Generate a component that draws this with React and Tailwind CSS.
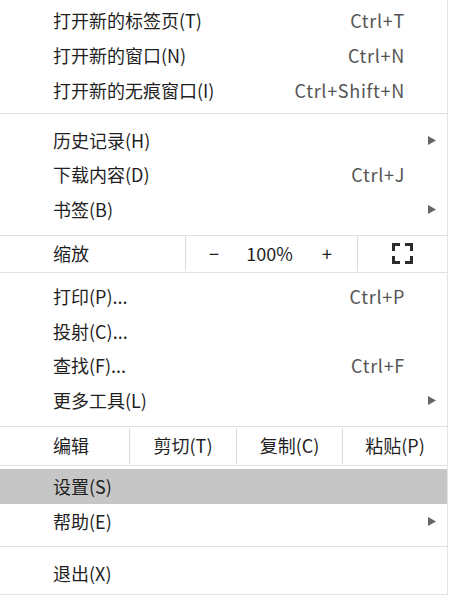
import React from "react";

const font = { fontFamily: '"Noto Sans CJK SC", "Noto Sans", sans-serif' };

function Arrow() {
  return (
    <svg width="8" height="9" viewBox="0 0 8 9" className="mr-[11px]">
      <polygon points="0,0 8,4.5 0,9" fill="#666" />
    </svg>
  );
}

function Item({ label, shortcut, sub, h = "h-[34.5px]", active }) {
  return (
    <div className={`flex items-center ${h} pl-[53px] ${active ? "bg-[#c6c6c6]" : ""}`}>
      <span className="flex-1">{label}</span>
      {shortcut && <span className="mr-[42px] tracking-[0.7px] text-[#555]">{shortcut}</span>}
      {sub && <Arrow />}
    </div>
  );
}

function Sep({ className = "" }) {
  return <div className={`h-px bg-[#e1e1e1] ${className}`} />;
}

function FullscreenIcon() {
  return (
    <svg width="21" height="21" viewBox="0 0 21 21" fill="none" stroke="#2b2b2b" strokeWidth="3">
      <path d="M1.5 8V1.5H8" />
      <path d="M13 1.5H19.5V8" />
      <path d="M19.5 13V19.5H13" />
      <path d="M8 19.5H1.5V13" />
    </svg>
  );
}

export default function App() {
  return (
    <div className="bg-white w-[449px] h-[595px] text-[18px] text-[#1f1f1f]" style={font}>
      <div className="w-[448px] border-r border-b border-[#e4e4e4] pt-[3px] pb-[3px]">
        <Item label="打开新的标签页(T)" shortcut="Ctrl+T" h="h-[35px]" />
        <Item label="打开新的窗口(N)" shortcut="Ctrl+N" h="h-[35px]" />
        <Item label="打开新的无痕窗口(I)" shortcut="Ctrl+Shift+N" h="h-[35px]" />
        <Sep className="mt-[5px] mb-[9px]" />

        <Item label="历史记录(H)" sub />
        <Item label="下载内容(D)" shortcut="Ctrl+J" />
        <Item label="书签(B)" sub />
        <Sep className="mt-[8px]" />

        {/* zoom row */}
        <div className="flex h-[36px] items-stretch">
          <div className="w-[185px] flex items-center pl-[53px]">缩放</div>
          <div className="w-px bg-[#dcdcdc] mb-[1px]" />
          <div className="w-[171px] flex items-center">
            <span className="w-[56px] text-center">−</span>
            <span className="flex-1 text-center">100%</span>
            <span className="w-[60px] text-center">+</span>
          </div>
          <div className="w-px bg-[#dcdcdc] mb-[1px]" />
          <div className="flex-1 flex items-center justify-center">
            <FullscreenIcon />
          </div>
        </div>
        <Sep className="mb-[7px]" />

        <Item label="打印(P)..." shortcut="Ctrl+P" />
        <Item label="投射(C)..." />
        <Item label="查找(F)..." shortcut="Ctrl+F" />
        <Item label="更多工具(L)" sub />
        <Sep className="mt-[8px]" />

        {/* edit row */}
        <div className="flex h-[38px] items-stretch">
          <div className="w-[129px] flex items-center pl-[53px]">编辑</div>
          <div className="w-px bg-[#dcdcdc] my-[1px]" />
          <div className="w-[106px] flex items-center justify-center">剪切(T)</div>
          <div className="w-px bg-[#dcdcdc] my-[1px]" />
          <div className="w-[105px] flex items-center justify-center">复制(C)</div>
          <div className="w-px bg-[#dcdcdc] my-[1px]" />
          <div className="flex-1 flex items-center justify-center">粘贴(P)</div>
        </div>
        <Sep className="mb-[3px]" />

        <Item label="设置(S)" h="h-[35px]" active />
        <Item label="帮助(E)" h="h-[35px]" sub />
        <Sep className="mt-[7px] mb-[9px]" />

        <Item label="退出(X)" h="h-[35px]" />
      </div>
    </div>
  );
}
